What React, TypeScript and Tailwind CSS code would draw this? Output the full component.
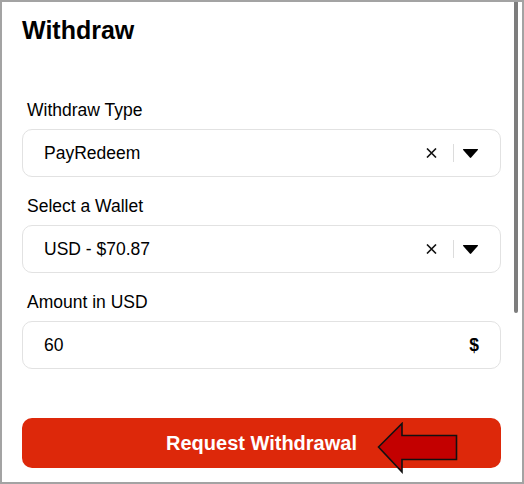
import { ReactNode } from 'react';

const font = { fontFamily: '"Liberation Sans", Arial, sans-serif' };

const ClearIcon = () => (
  <svg width="11" height="10" viewBox="0 0 11 10" className="block">
    <path d="M1 0.5 L10 9.5 M10 0.5 L1 9.5" stroke="#111" strokeWidth="1.6" fill="none" />
  </svg>
);

const CaretIcon = () => (
  <svg width="17" height="11" viewBox="0 0 17 11" className="block">
    <path d="M1.5 1 L15.5 1 Q16.5 1 15.8 1.9 L9.2 9.6 Q8.5 10.4 7.8 9.6 L1.2 1.9 Q0.5 1 1.5 1 Z" fill="#000" />
  </svg>
);

const Field = ({ label, children }: { label: string; children: ReactNode }) => (
  <div className="flex flex-col">
    <div className="h-[24px] pl-[5px] text-[17.5px] leading-[28px] text-black">{label}</div>
    <div className="mt-[9px] flex h-[48px] w-[479px] items-center rounded-[10px] border border-[#e2e2e2] bg-white pl-[21px] pr-[21px] text-[17.5px] text-black">
      {children}
    </div>
  </div>
);

const SelectValue = ({ value }: { value: string }) => (
  <>
    <span className="flex-1">{value}</span>
    <span className="mr-[16px]">
      <ClearIcon />
    </span>
    <span className="mr-[8px] h-[18px] w-px bg-[#dcdcdc]" />
    <CaretIcon />
  </>
);

export default function App() {
  return (
    <div style={font} className="relative h-[484px] w-[524px] overflow-hidden border-2 border-[#a3a3a3] bg-white">
      {/* scrollbar thumb */}
      <div className="absolute left-[512px] top-0 h-[311px] w-[4px] rounded-b-full bg-[#7d7d7d]" />

      <div className="pl-[20px] pt-[13px]">
        <h1 className="text-[25px] font-bold leading-[30px] text-black">Withdraw</h1>

        <div className="mt-[51px] flex flex-col gap-[15px]">
          <Field label="Withdraw Type">
            <SelectValue value="PayRedeem" />
          </Field>
          <Field label="Select a Wallet">
            <SelectValue value="USD - $70.87" />
          </Field>
          <Field label="Amount in USD">
            <span className="flex-1">60</span>
            <span className="font-bold">$</span>
          </Field>
        </div>

        <button className="relative mt-[49px] flex h-[50px] w-[479px] items-center justify-center rounded-[10px] bg-[#dd280a] text-[20px] font-bold text-white">
          Request Withdrawal
          <svg
            className="absolute left-[355px] top-[4px]"
            width="82"
            height="52"
            viewBox="0 0 82 52"
          >
            <path
              d="M1.5 25 L25 1.5 L25 13.5 L79.5 13.5 L79.5 37.5 L25 37.5 L25 50 Z"
              fill="#c30000"
              stroke="#111"
              strokeWidth="1.6"
              strokeLinejoin="miter"
            />
          </svg>
        </button>
      </div>
    </div>
  );
}
